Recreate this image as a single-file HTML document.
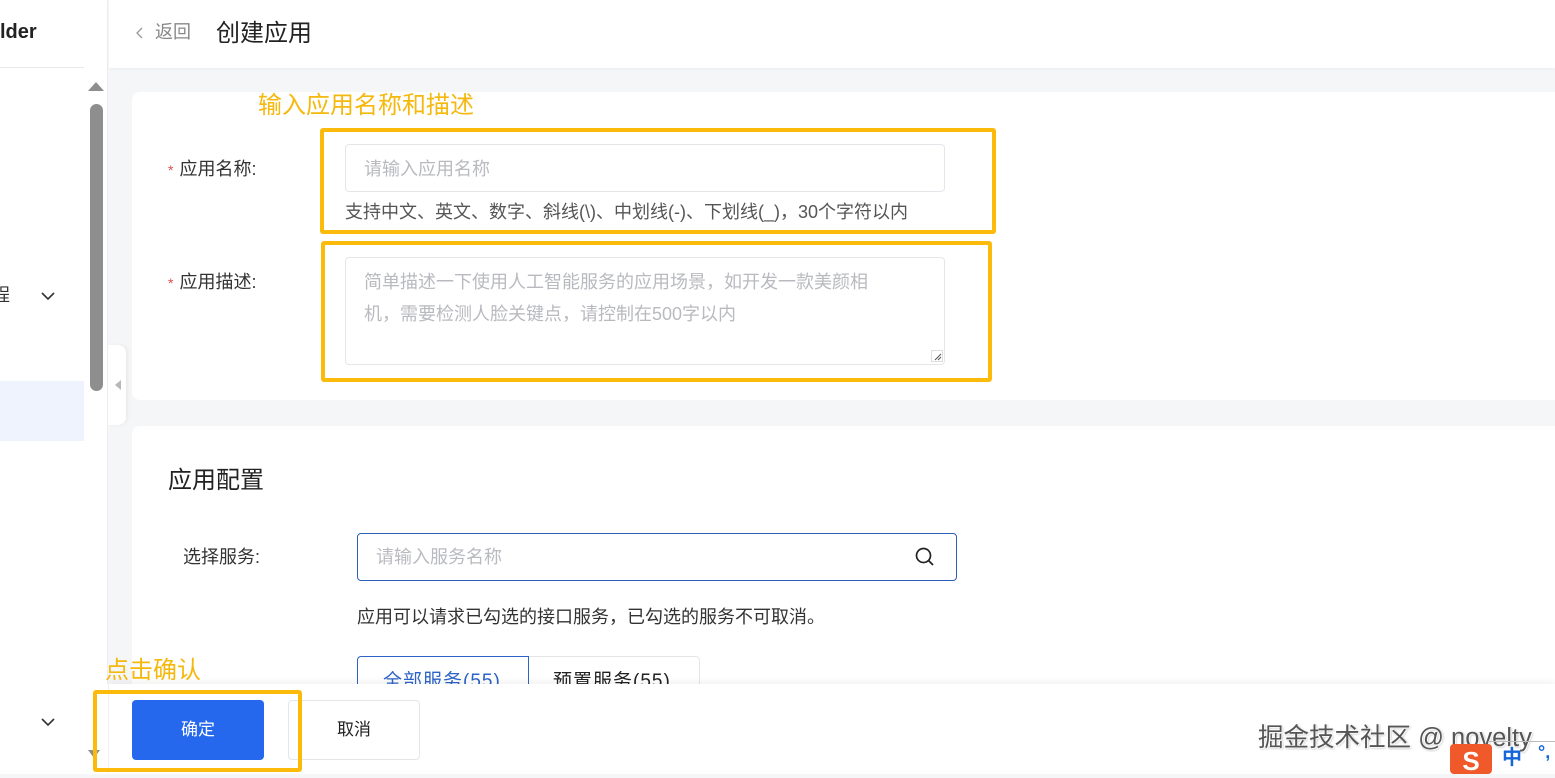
<!DOCTYPE html>
<html><head><meta charset="utf-8">
<style>
*{box-sizing:border-box;margin:0;padding:0}
body{width:1555px;height:774px;overflow:hidden;background:#f5f6f8;font-family:"Liberation Sans","Noto Sans CJK SC",sans-serif;position:relative;color:#333;line-height:1.2}
.a{position:absolute}
.hl{border:4px solid #fcbb0a;border-radius:3px}
.note{color:#f5b80c;font-size:24px}
.inp{border:1px solid #e4e6ea;border-radius:4px;background:#fff}
.ph{color:#b8babf;font-size:18px}
.lbl{font-size:18px;color:#333}
.star{color:#e34d4d;margin-right:6px;font-size:14px}
</style></head><body>
<!-- sidebar -->
<div class="a" style="left:0;top:0;width:108px;height:774px;background:#fff;border-right:1px solid #eceef1"></div>
<div class="a" style="left:0;top:20px;font-size:20px;font-weight:bold;color:#222">lder</div>
<div class="a" style="left:0;top:67px;width:84px;height:1px;background:#e8e9ec"></div>
<div class="a" style="left:0;top:381px;width:84px;height:60px;background:#eef3fd"></div>
<div class="a" style="left:-8px;top:285px;font-size:18px;color:#333">程</div>
<svg class="a" style="left:40px;top:290px" width="16" height="12"><path d="M2 3 L8 9 L14 3" stroke="#333" stroke-width="1.6" fill="none"/></svg>
<div class="a" style="left:88px;top:82px;width:0;height:0;border-left:8px solid transparent;border-right:8px solid transparent;border-bottom:9px solid #8e8e8e"></div>
<div class="a" style="left:90px;top:104px;width:13px;height:287px;background:#8e8e8e;border-radius:7px"></div>
<div class="a" style="left:108px;top:345px;width:18px;height:80px;background:#fff;border-radius:0 8px 8px 0;box-shadow:2px 0 4px rgba(0,0,0,.05)"></div>
<div class="a" style="left:115px;top:380px;width:0;height:0;border-top:5px solid transparent;border-bottom:5px solid transparent;border-right:6px solid #b8b8b8"></div>
<!-- header -->
<div class="a" style="left:109px;top:0;width:1446px;height:68px;background:#fff;box-shadow:0 2px 3px rgba(0,0,0,.03)"></div>
<svg class="a" style="left:135px;top:26px" width="10" height="14"><path d="M7 2 L2 7 L7 12" stroke="#999" stroke-width="1.3" fill="none"/></svg>
<div class="a" style="left:155px;top:22px;font-size:18px;color:#888">返回</div>
<div class="a" style="left:216px;top:20px;font-size:24px;color:#222">创建应用</div>
<!-- card 1 -->
<div class="a" style="left:132px;top:92px;width:1423px;height:308px;background:#fff;border-radius:8px 0 0 8px"></div>
<div class="a note" style="left:258px;top:92px">输入应用名称和描述</div>
<div class="a lbl" style="left:168px;top:159px"><span class="star">*</span>应用名称:</div>
<div class="a inp" style="left:345px;top:144px;width:600px;height:48px"></div>
<div class="a ph" style="left:364px;top:159px">请输入应用名称</div>
<div class="a" style="left:345px;top:202px;font-size:18px;color:#555;white-space:nowrap">支持中文、英文、数字、斜线(\)、中划线(-)、下划线(_)，30个字符以内</div>
<div class="a hl" style="left:320px;top:128px;width:676px;height:106px"></div>
<div class="a lbl" style="left:168px;top:272px"><span class="star">*</span>应用描述:</div>
<div class="a inp" style="left:345px;top:257px;width:600px;height:108px"></div>
<div class="a ph" style="left:364px;top:266px;line-height:32px;width:522px">简单描述一下使用人工智能服务的应用场景，如开发一款美颜相机，需要检测人脸关键点，请控制在500字以内</div>
<svg class="a" style="left:931px;top:350px" width="12" height="12"><rect x="0.5" y="0.5" width="11" height="11" fill="#fff" stroke="#ddd"/><path d="M4 10 L10 4 M7 10 L10 7" stroke="#555"/></svg>
<div class="a hl" style="left:321px;top:241px;width:671px;height:141px"></div>
<!-- card 2 -->
<div class="a" style="left:132px;top:426px;width:1423px;height:300px;background:#fff;border-radius:8px 0 0 0"></div>
<div class="a" style="left:168px;top:467px;font-size:24px;color:#222">应用配置</div>
<div class="a lbl" style="left:183px;top:547px">选择服务:</div>
<div class="a" style="left:357px;top:533px;width:600px;height:48px;border:1px solid #2d5fb8;border-radius:4px;background:#fff"></div>
<div class="a ph" style="left:376px;top:547px">请输入服务名称</div>
<svg class="a" style="left:914px;top:546px" width="22" height="22"><circle cx="9.5" cy="9.5" r="7" stroke="#222" stroke-width="1.7" fill="none"/><path d="M14.5 14.5 L19 19" stroke="#222" stroke-width="1.8"/></svg>
<div class="a" style="left:357px;top:607px;font-size:18px;color:#333;white-space:nowrap">应用可以请求已勾选的接口服务，已勾选的服务不可取消。</div>
<div class="a" style="left:357px;top:656px;width:343px;height:40px;border:1px solid #e4e6ea;border-radius:4px;background:#fff"></div>
<div class="a" style="left:357px;top:656px;width:172px;height:40px;border:1px solid #2d64c8;border-radius:4px 0 0 4px"></div>
<div class="a" style="left:383px;top:671px;font-size:19px;letter-spacing:1px;color:#2d64c8;white-space:nowrap">全部服务(55)</div>
<div class="a" style="left:553px;top:671px;font-size:19px;letter-spacing:1px;color:#222;white-space:nowrap">预置服务(55)</div>
<!-- footer -->
<div class="a" style="left:109px;top:684px;width:1446px;height:90px;background:#fff;box-shadow:0 -3px 6px rgba(0,0,0,.05)"></div>
<div class="a" style="left:0;top:684px;width:108px;height:90px;background:#fff"></div>
<svg class="a" style="left:40px;top:716px" width="16" height="12"><path d="M2 3 L8 9 L14 3" stroke="#333" stroke-width="1.6" fill="none"/></svg>
<div class="a" style="left:88px;top:750px;width:0;height:0;border-left:6px solid transparent;border-right:6px solid transparent;border-top:8px solid #8e8e8e"></div>
<div class="a note" style="left:105px;top:657px">点击确认</div>
<div class="a" style="left:132px;top:700px;width:132px;height:60px;background:#2668ed;border-radius:4px;color:#fff;font-size:17px;text-align:center;line-height:60px">确定</div>
<div class="a" style="left:288px;top:700px;width:132px;height:60px;background:#fff;border:1px solid #e4e6ea;border-radius:4px;color:#222;font-size:17px;text-align:center;line-height:58px">取消</div>
<div class="a hl" style="left:93px;top:690px;width:209px;height:82px"></div>
<!-- watermark -->
<div class="a" style="left:1258px;top:723px;font-size:25.5px;color:#555;white-space:nowrap;text-shadow:1px 1px 1px #fff,-1px -1px 1px #fff,1px 1px 2px #999">掘金技术社区 @ novelty</div>
<div class="a" style="left:1488px;top:741px;width:67px;height:1px;background:#bbb"></div>
<div class="a" style="left:1450px;top:744px;width:42px;height:30px;background:#f0592a;border-radius:4px;color:#fff;font-weight:bold;font-size:26px;line-height:34px;text-align:center">S</div>
<div class="a" style="left:1502px;top:746px;font-size:20px;color:#1565d8;font-weight:bold">中</div>
<div class="a" style="left:1538px;top:742px;font-size:18px;color:#1565d8;font-weight:bold">°,</div>
</body></html>
